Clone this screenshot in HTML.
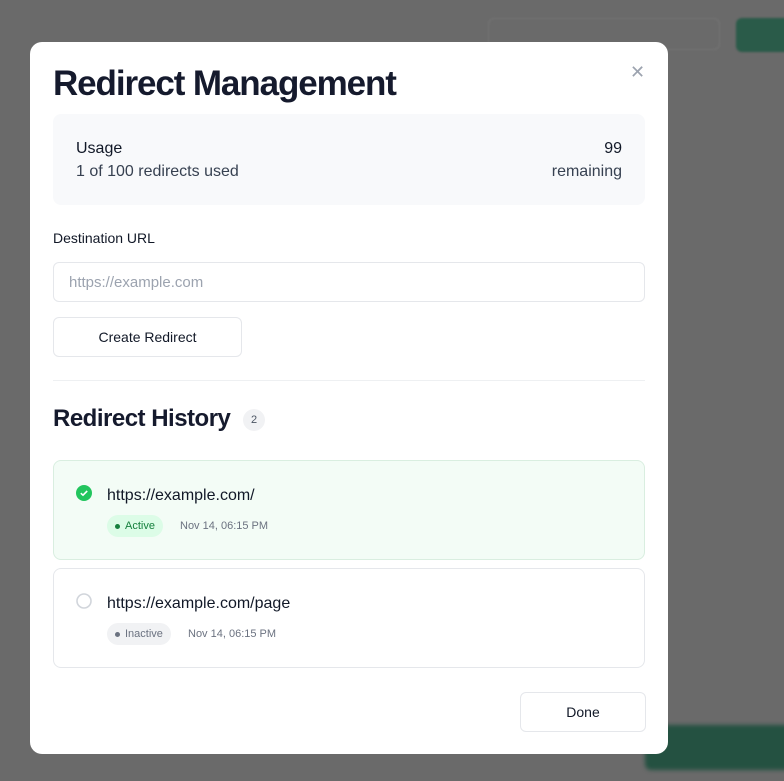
<!DOCTYPE html>
<html><head><style>
*{box-sizing:border-box;margin:0;padding:0}
body{width:784px;height:781px;background:#6a6a6a;font-family:"Liberation Sans",sans-serif;position:relative;overflow:hidden;color:#111827}
.bgbtn{position:absolute;left:488px;top:18px;width:232px;height:32px;border:1px solid #767676;border-radius:6px;filter:blur(1px)}
.bggreen{position:absolute;left:736px;top:18px;width:60px;height:34px;background:#2a5b49;border-radius:6px;filter:blur(1px)}
.bggreen2{position:absolute;left:645px;top:725px;width:160px;height:45px;background:#245141;border-radius:6px;filter:blur(2px)}
.modal{position:absolute;left:30px;top:42px;width:638px;height:712px;background:#fff;border-radius:12px}
h1{position:absolute;left:23px;top:22px;font-size:35px;font-weight:700;letter-spacing:-1.1px;color:#151a2d}
.x{position:absolute;left:600px;top:20px;font-size:18px;color:#9ca3af}
.usage{position:absolute;left:23px;top:72px;width:592px;height:91px;background:#f8f9fb;border-radius:8px;font-size:16px}
.usage div{position:absolute}
.lbl{position:absolute;left:23px;top:188px;font-size:14px}
.inp{position:absolute;left:23px;top:220px;width:592px;height:40px;border:1px solid #e5e7eb;border-radius:6px;font-size:15px;color:#9ca3af;padding:11px 15px}
.btn{position:absolute;border:1px solid #e5e7eb;border-radius:6px;font-size:14px;text-align:center}
.hr{position:absolute;left:23px;top:338px;width:592px;height:1px;background:#eef0f2}
h2{position:absolute;left:23px;top:363px;font-size:24px;font-weight:700;letter-spacing:-0.5px;color:#151a2d}
.cnt{position:absolute;left:213px;top:367px;width:22px;height:22px;border-radius:11px;background:#f1f2f4;font-size:11px;text-align:center;line-height:22px;color:#4b5563}
.item{position:absolute;left:23px;width:592px;height:100px;border:1px solid #e5e7eb;border-radius:8px}
.url{position:absolute;left:53px;top:26px;font-size:16px}
.pill{position:absolute;left:53px;top:54px;height:22px;border-radius:11px;font-size:11px;line-height:22px;padding:0 8px 0 18px}
.pill:before{content:"";position:absolute;left:8px;top:9px;width:5px;height:5px;border-radius:3px;background:currentColor}
.date{position:absolute;top:59px;font-size:11px;color:#6b7280}
</style></head><body>
<div class="bgbtn"></div><div class="bggreen"></div><div class="bggreen2"></div>
<div class="modal">
<h1>Redirect Management</h1>
<div class="x">✕</div>
<div class="usage">
<div style="left:23px;top:26px">Usage</div>
<div style="left:23px;top:49px;color:#374151">1 of 100 redirects used</div>
<div style="right:23px;top:26px">99</div>
<div style="right:23px;top:49px;color:#374151">remaining</div>
</div>
<div class="lbl">Destination URL</div>
<div class="inp">https://example.com</div>
<div class="btn" style="left:23px;top:275px;width:189px;height:40px;line-height:38px">Create Redirect</div>
<div class="hr"></div>
<h2>Redirect History</h2>
<div class="cnt">2</div>
<div class="item" style="top:418px;background:#f3fcf6;border-color:#d9eee0">
<svg style="position:absolute;left:22px;top:24px" width="16" height="16"><circle cx="8" cy="8" r="8" fill="#22c55e"/><path d="M4.8 8.2l2.2 2 4.2-4.2" stroke="#fff" stroke-width="1.6" fill="none"/></svg>
<div class="url">https://example.com/</div>
<div class="pill" style="background:#dcfce7;color:#15803d">Active</div>
<div class="date" style="left:126px">Nov 14, 06:15 PM</div>
</div>
<div class="item" style="top:526px">
<svg style="position:absolute;left:22px;top:24px" width="16" height="16"><circle cx="8" cy="8" r="7" fill="none" stroke="#d1d5db" stroke-width="1.6"/></svg>
<div class="url">https://example.com/page</div>
<div class="pill" style="background:#f1f2f4;color:#6b7280">Inactive</div>
<div class="date" style="left:134px">Nov 14, 06:15 PM</div>
</div>
<div class="btn" style="left:490px;top:650px;width:126px;height:40px;line-height:38px">Done</div>
</div>
</body></html>
